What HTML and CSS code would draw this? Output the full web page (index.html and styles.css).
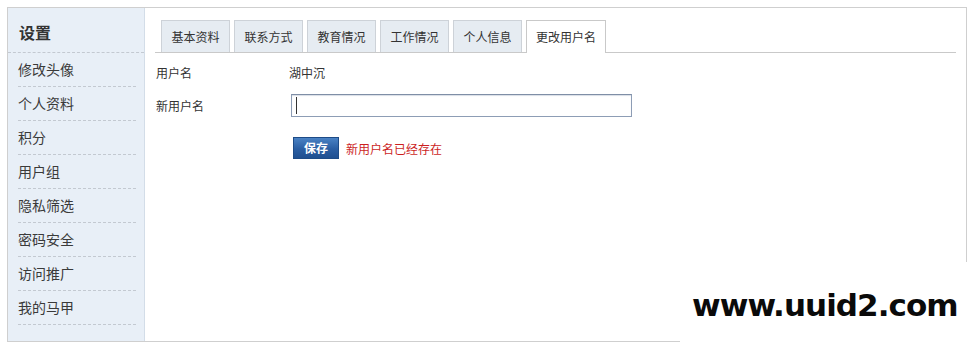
FILE: index.html
```html
<!DOCTYPE html>
<html lang="zh-CN">
<head>
<meta charset="utf-8">
<title>设置 - 更改用户名</title>
<link rel="stylesheet" href="styles.css">
</head>
<body>
<div class="frame">
  <aside class="side">
    <h2 class="side-title">设置</h2>
    <ul class="side-menu">
      <li>修改头像</li>
      <li>个人资料</li>
      <li>积分</li>
      <li>用户组</li>
      <li>隐私筛选</li>
      <li>密码安全</li>
      <li>访问推广</li>
      <li>我的马甲</li>
    </ul>
  </aside>
  <main class="main">
    <ul class="tabs">
      <li class="tab">基本资料</li>
      <li class="tab">联系方式</li>
      <li class="tab">教育情况</li>
      <li class="tab">工作情况</li>
      <li class="tab">个人信息</li>
      <li class="tab active">更改用户名</li>
    </ul>
    <div class="form">
      <div class="row row-first">
        <span class="label">用户名</span>
        <span class="value">湖中沉</span>
      </div>
      <div class="row row-input">
        <span class="label">新用户名</span>
        <span class="field"><input class="text" type="text" value=""><span class="caret"></span></span>
      </div>
      <div class="row row-btn">
        <span class="label"></span>
        <button class="btn" type="button">保存</button>
        <span class="error">新用户名已经存在</span>
      </div>
    </div>
  </main>
</div>
<div class="watermark">www.uuid2.com</div>
</body>
</html>
```
FILE: styles.css
```css
html, body {
  margin: 0;
  padding: 0;
  background: #fff;
}
body {
  font-family: "Noto Sans CJK SC", "Liberation Sans", sans-serif;
  font-size: 12px;
  color: #333;
  width: 976px;
  height: 351px;
  overflow: hidden;
  position: relative;
}
ul {
  list-style: none;
  margin: 0;
  padding: 0;
}
.frame {
  margin: 7px 0 0 7px;
  width: 958px;
  height: 333px;
  border: 1px solid #cfcfcf;
  display: flex;
}
.side {
  width: 136px;
  background: #e8eff7;
  border-right: 1px solid #d3dde8;
}
.side-title {
  margin: 0;
  padding: 14px 0 10px 11px;
  height: 20px;
  line-height: 20px;
  font-size: 16px;
  font-weight: bold;
  color: #333;
  border-bottom: 1px dashed #c3c9d1;
}
.side-menu li {
  margin: 0 8px 0 10px;
  height: 33px;
  line-height: 33px;
  font-size: 14px;
  color: #3a3a3a;
  border-bottom: 1px dashed #c3c9d1;
}
.main {
  flex: 1;
  padding: 12px 10px 0 10px;
}
.tabs {
  display: flex;
  gap: 4px;
  padding-left: 6px;
  border-bottom: 1px solid #c9c9c9;
  height: 32px;
}
.tab {
  height: 31px;
  line-height: 31px;
  padding: 0 9.5px;
  background: #e6ecf2;
  border: 1px solid #cdd2d8;
  border-bottom: none;
  font-size: 12px;
  color: #333;
}
.tab.active {
  background: #fff;
  border-color: #c9c9c9;
  height: 32px;
  padding: 0 9px;
}
.form {
  padding-left: 1px;
  padding-top: 8px;
}
.row {
  display: flex;
  align-items: center;
}
.row-first {
  height: 22px;
}
.row-input {
  margin-top: 11px;
  height: 23px;
}
.row-btn {
  margin-top: 20px;
  height: 22px;
}
.label {
  width: 133px;
  flex: none;
}
.value {
  margin-left: 0;
}
.field {
  position: relative;
  margin-left: 2px;
  display: block;
}
.text {
  display: block;
  box-sizing: border-box;
  width: 341px;
  height: 23px;
  margin: 0;
  padding: 0 4px;
  border: 1px solid #8d9db5;
  border-top-color: #7f8ea6;
  box-shadow: inset 0 1px 1px #d9dee6;
  outline: none;
  background: #fff;
  font-family: inherit;
  font-size: 12px;
}
.caret {
  position: absolute;
  left: 5px;
  top: 3px;
  width: 1px;
  height: 17px;
  background: #333;
}
.btn {
  margin: 0 0 0 4px;
  width: 46px;
  height: 22px;
  padding: 0;
  border: 1px solid #1d4b87;
  background: linear-gradient(#4a82c4, #2a5ea3 55%, #1f4f90);
  color: #fff;
  font-family: inherit;
  font-size: 12px;
  font-weight: bold;
  line-height: 20px;
}
.error {
  margin-left: 7px;
  color: #cc1f1f;
}
.watermark {
  position: absolute;
  left: 680px;
  top: 262px;
  right: 0;
  bottom: 0;
  background: #fff;
  padding: 28px 0 0 12px;
  font-family: "DejaVu Sans", sans-serif;
  font-weight: bold;
  font-size: 31px;
  line-height: 31px;
  letter-spacing: -0.95px;
  color: #0a0a0a;
}
```
